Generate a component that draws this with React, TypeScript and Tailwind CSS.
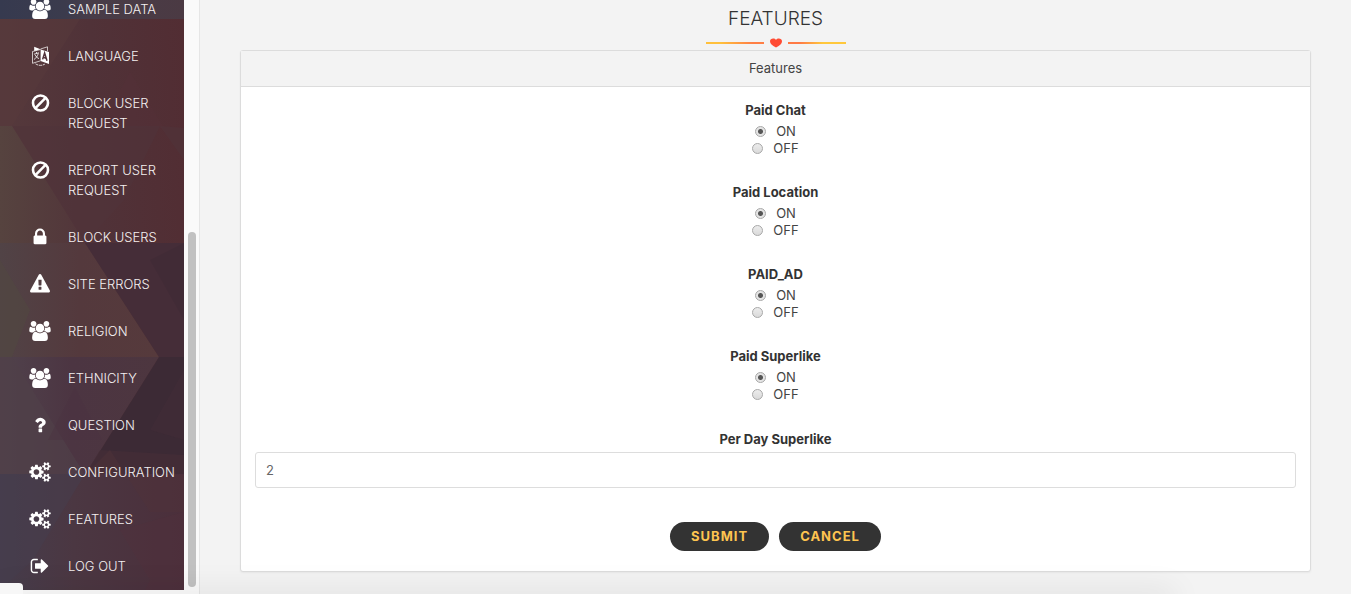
import type { ReactNode } from "react";

function Glyph({ d, wide = false }: { d: string; wide?: boolean }) {
  return (
    <svg
      viewBox={wide ? "0 0 1920 1792" : "0 0 1792 1792"}
      className={wide ? "h-5 w-[22px]" : "h-5 w-5"}
      fill="currentColor"
      aria-hidden="true"
    >
      <path d={d} />
    </svg>
  );
}

const usersPath =
  "M593 896q-162 5-265 128h-134q-82 0-138-40.5t-56-118.5q0-353 124-353 6 0 43.5 21t97.5 42.5 119 21.5q67 0 133-23-5 37-5 66 0 139 81 256zm1071 637q0 120-73 189.5t-194 69.5h-874q-121 0-194-69.5t-73-189.5q0-53 3.5-103.5t14-109 26.5-108.5 43-97.5 62-81 85.5-53.5 111.5-20q10 0 43 21.5t73 48 107 48 135 21.5 135-21.5 107-48 73-48 43-21.5q61 0 111.5 20t85.5 53.5 62 81 43 97.5 26.5 108.5 14 109 3.5 103.5zm-1024-1277q0 106-75 181t-181 75-181-75-75-181 75-181 181-75 181 75 75 181zm704 384q0 159-112.5 271.5t-271.5 112.5-271.5-112.5-112.5-271.5 112.5-271.5 271.5-112.5 271.5 112.5 112.5 271.5zm576 225q0 78-56 118.5t-138 40.5h-134q-103-123-265-128 81-117 81-256 0-29-5-66 66 23 133 23 59 0 119-21.5t97.5-42.5 43.5-21q124 0 124 353zm-128-609q0 106-75 181t-181 75-181-75-75-181 75-181 181-75 181 75 75 181z";
const cogsPath =
  "M896 896q0-106-75-181t-181-75-181 75-75 181 75 181 181 75 181-75 75-181zm768 512q0-52-38-90t-90-38-90 38-38 90q0 53 37.5 90.5t90.5 37.5 90.5-37.5 37.5-90.5zm0-1024q0-52-38-90t-90-38-90 38-38 90q0 53 37.5 90.5t90.5 37.5 90.5-37.5 37.5-90.5zm-384 421v185q0 10-7 19.5t-16 10.5l-155 24q-11 35-32 76 34 48 90 115 7 11 7 20 0 12-7 19-23 30-82.5 89.5t-78.5 59.5q-11 0-21-7l-115-90q-37 19-77 31-11 108-23 155-7 24-30 24h-186q-11 0-20-7.5t-10-17.5l-23-153q-34-10-75-31l-118 89q-7 7-20 7-11 0-21-8-144-133-144-160 0-9 7-19 10-14 41-53t47-61q-23-44-35-82l-152-24q-10-1-17-9.5t-7-19.5v-185q0-10 7-19.5t16-10.5l155-24q11-35 32-76-34-48-90-115-7-11-7-20 0-12 7-20 22-30 82-89t79-59q11 0 21 7l115 90q34-18 77-32 11-108 23-154 7-24 30-24h186q11 0 20 7.5t10 17.5l23 153q34 10 75 31l118-89q8-7 20-7 11 0 21 8 144 133 144 160 0 8-7 19-12 16-42 54t-45 60q23 48 34 82l152 23q10 2 17 10.5t7 19.5zm640 533v140q0 16-149 31-12 27-30 52 51 113 51 138 0 4-4 7-122 71-124 71-8 0-46-47t-52-68q-20 2-30 2t-30-2q-14 21-52 68t-46 47q-2 0-124-71-4-3-4-7 0-25 51-138-18-25-30-52-149-15-149-31v-140q0-16 149-31 13-29 30-52-51-113-51-138 0-4 4-7 4-2 35-20t59-34 30-16q8 0 46 46.5t52 67.5q20-2 30-2t30 2q51-71 92-112l6-2q4 0 124 70 4 3 4 7 0 25-51 138 17 23 30 52 149 15 149 31zm0-1024v140q0 16-149 31-12 27-30 52 51 113 51 138 0 4-4 7-122 71-124 71-8 0-46-47t-52-68q-20 2-30 2t-30-2q-14 21-52 68t-46 47q-2 0-124-71-4-3-4-7 0-25 51-138-18-25-30-52-149-15-149-31v-140q0-16 149-31 13-29 30-52-51-113-51-138 0-4 4-7 4-2 35-20t59-34 30-16q8 0 46 46.5t52 67.5q20-2 30-2t30 2q51-71 92-112l6-2q4 0 124 70 4 3 4 7 0 25-51 138 17 23 30 52 149 15 149 31z";
const lockPath =
  "M640 768h512v-192q0-106-75-181t-181-75-181 75-75 181v192zm832 96v576q0 40-28 68t-68 28h-960q-40 0-68-28t-28-68v-576q0-40 28-68t68-28h32v-192q0-184 132-316t316-132 316 132 132 316v192h32q40 0 68 28t28 68z";
const warningPath =
  "M1024 1375v-190q0-14-9.5-23.5t-22.5-9.5h-192q-13 0-22.5 9.5t-9.5 23.5v190q0 14 9.5 23.5t22.5 9.5h192q13 0 22.5-9.5t9.5-23.5zm-2-374l18-459q0-12-10-19-13-11-24-11h-220q-11 0-24 11-10 7-10 21l17 457q0 10 10 16.5t24 6.5h185q14 0 23.5-6.5t10.5-16.5zm-14-934l768 1408q35 63-2 126-17 29-46.5 46t-63.5 17h-1536q-34 0-63.5-17t-46.5-46q-37-63-2-126l768-1408q17-31 47-49t65-18 65 18 47 49z";
const questionPath =
  "M1088 1256v240q0 16-12 28t-28 12h-240q-16 0-28-12t-12-28v-240q0-16 12-28t28-12h240q16 0 28 12t12 28zm316-600q0 54-15.5 101t-35 76.5-55 59.5-57.5 43.5-61 35.5q-41 23-68.5 65t-27.5 67q0 17-12 32.5t-28 15.5h-240q-15 0-25.5-18.5t-10.5-37.5v-45q0-83 65-156.5t143-108.5q59-27 84-56t25-76q0-42-46.5-74t-107.5-32q-65 0-108 29-35 25-107 115-13 16-31 16-12 0-25-8l-164-125q-13-10-15.5-25t5.5-28q160-266 464-266 80 0 161 31t146 83 106 127.5 41 158.5z";
const logoutPath =
  "M704 1440q0 4 1 20t.5 26.5-3 23.5-10 19.5-20.5 6.5h-320q-119 0-203.5-84.5t-84.5-203.5v-704q0-119 84.5-203.5t203.5-84.5h320q13 0 22.5 9.5t9.5 22.5q0 4 1 20t.5 26.5-3 23.5-10 19.5-20.5 6.5h-320q-66 0-113 47t-47 113v704q0 66 47 113t113 47h312l11.5 1 11.5 3 8 5.5 7 9 2 13.5zm928-544q0 26-19 45l-544 544q-19 19-45 19t-45-19-19-45v-288h-448q-26 0-45-19t-19-45v-384q0-26 19-45t45-19h448v-288q0-26 19-45t45-19 45 19l544 544q19 19 19 45z";

function BanIcon() {
  return (
    <svg viewBox="0 0 20 20" className="h-5 w-5" fill="none" stroke="currentColor" strokeWidth="2.6" aria-hidden="true">
      <circle cx="10.5" cy="10" r="7.5" />
      <path d="M5.2 15.3 15.8 4.7" />
    </svg>
  );
}

function LanguageIcon() {
  return (
    <svg viewBox="0 0 20 20" className="h-5 w-5" fill="none" stroke="currentColor" aria-hidden="true">
      <path d="M10.6 3.4 19 6v12l-8.4-3z" fill="currentColor" stroke="none" />
      <path d="M4.2.8 10.5 3.2 4.2 5z" fill="currentColor" stroke="none" />
      <path d="M10.5 3.5 2.5 5.5v11.8l8-2.5M10.5 3 17.5.8v4.5" strokeWidth=".7" />
      <path d="M4 8.2 9 6.8M6.3 6l.6 1.4M8.3 7.5C7.7 10 6 12.2 4 13.5M5.2 8.8c.8 1.8 2 3 3.800 3.800" strokeWidth=".8" />
      <path d="m12.6 13.4 2-6.4 2.4 7.8M13.4 11.4l2.6.8" stroke="#52333a" strokeWidth="1.5" />
      <path d="M5.500 17.800c2.800 2 6.600 2 9.300.4" strokeWidth=".8" strokeDasharray="3 .7" />
    </svg>
  );
}

const menu: { label: string; icon: ReactNode }[] = [
  { label: "SAMPLE DATA", icon: <Glyph d={usersPath} wide /> },
  { label: "LANGUAGE", icon: <LanguageIcon /> },
  { label: "BLOCK USER REQUEST", icon: <BanIcon /> },
  { label: "REPORT USER REQUEST", icon: <BanIcon /> },
  { label: "BLOCK USERS", icon: <Glyph d={lockPath} /> },
  { label: "SITE ERRORS", icon: <Glyph d={warningPath} /> },
  { label: "RELIGION", icon: <Glyph d={usersPath} wide /> },
  { label: "ETHNICITY", icon: <Glyph d={usersPath} wide /> },
  { label: "QUESTION", icon: <Glyph d={questionPath} /> },
  { label: "CONFIGURATION", icon: <Glyph d={cogsPath} wide /> },
  { label: "FEATURES", icon: <Glyph d={cogsPath} wide /> },
  { label: "LOG OUT", icon: <Glyph d={logoutPath} /> },
];

function SidebarBackdrop() {
  return (
    <svg
      viewBox="0 0 184 590"
      preserveAspectRatio="none"
      className="absolute inset-0 h-full w-full"
      aria-hidden="true"
    >
      <defs>
        <linearGradient id="top" x1="0" x2="1">
          <stop offset="0" stopColor="#363a4f" />
          <stop offset=".35" stopColor="#3b3b4d" />
          <stop offset=".5" stopColor="#483c48" />
          <stop offset="1" stopColor="#4b3a43" />
        </linearGradient>
        <linearGradient id="red" x1="0" x2="1" y1=".2" y2="0">
          <stop offset="0" stopColor="#55393c" />
          <stop offset=".5" stopColor="#503238" />
          <stop offset="1" stopColor="#522d33" />
        </linearGradient>
        <linearGradient id="brown" x1="0" x2="1">
          <stop offset="0" stopColor="#56433f" />
          <stop offset="1" stopColor="#52353a" />
        </linearGradient>
        <linearGradient id="mid" x1="0" x2="1">
          <stop offset="0" stopColor="#514346" />
          <stop offset=".5" stopColor="#54393d" />
          <stop offset="1" stopColor="#563a3c" />
        </linearGradient>
        <linearGradient id="plum" x1="0" x2="1">
          <stop offset="0" stopColor="#50424c" />
          <stop offset=".45" stopColor="#4c3542" />
          <stop offset="1" stopColor="#4d363f" />
        </linearGradient>
        <linearGradient id="low" x1="0" x2="1">
          <stop offset="0" stopColor="#463d4c" />
          <stop offset=".4" stopColor="#4b3742" />
          <stop offset="1" stopColor="#4b2f3b" />
        </linearGradient>
      </defs>
      <rect width="184" height="590" fill="url(#red)" />
      <rect width="184" height="19" fill="url(#top)" />
      <path d="M80 19 12 126 0 126V19Z" fill="#58393c" opacity=".5" />
      <path d="M130 72 164 128H100Z" fill="#573238" opacity=".35" />
      <path d="M12 126H160L184 160V128L160 126 124 200 85 243Z" fill="#50343a" opacity=".6" />
      <path d="M0 126H12L85 243H0Z" fill="url(#brown)" />
      <path d="M0 243H85L159 357H0Z" fill="url(#mid)" />
      <path d="M0 260 30 310 12 357H0Z" fill="#524741" opacity=".6" />
      <path d="M85 243H184V357H159Z" fill="#452d38" />
      <path d="M150 260 184 243V320Z" fill="#3f2a36" opacity=".6" />
      <path d="M0 357H159L85 475H0Z" fill="url(#plum)" />
      <path d="M0 357H12L85 475H0Z" fill="#504049" opacity=".7" />
      <path d="M75 387 102 440H48Z" fill="#4b3242" opacity=".4" />
      <path d="M159 357H184V475H85Z" fill="#3c2a35" />
      <path d="M184 370 150 430 184 440Z" fill="#412c37" opacity=".5" />
      <path d="M100 450 184 455V475H85Z" fill="#452d37" opacity=".7" />
      <rect y="474" width="184" height="116" fill="url(#low)" />
      <path d="M0 474H85L33 560 0 590Z" fill="#453e4d" opacity=".5" />
      <path d="M110 450 150 512H184V475H85Z" fill="#50323a" opacity=".45" />
      <path d="M120 530 150 580 145 590H184V512Z" fill="#54303b" opacity=".35" />
    </svg>
  );
}

function Sidebar() {
  return (
    <aside className="flex w-[200px] shrink-0 bg-[#fafafa]">
      <nav className="relative w-[184px] self-start overflow-hidden pb-3.5">
        <SidebarBackdrop />
        <ul className="relative -mt-px flex flex-col gap-[27px]">
          {menu.map((item) => (
            <li key={item.label}>
              <a href="#" className="flex text-[13px] font-light leading-5 text-[#f4f0f1]">
                <span className="ml-[26px] mr-[15px] flex h-5 w-[27px] shrink-0 items-center justify-center text-white">
                  {item.icon}
                </span>
                <span>{item.label}</span>
              </a>
            </li>
          ))}
        </ul>
      </nav>
      <div className="flex grow flex-col border-r border-[#e6e6e6] pl-1 pt-[232px]">
        <div className="mb-[7px] w-2 grow rounded-full bg-[#c1c1c1]" />
      </div>
    </aside>
  );
}

function Divider() {
  return (
    <svg viewBox="0 0 142 10" className="h-2.5 w-[142px]" aria-hidden="true">
      <defs>
        <linearGradient id="leftLine" x1="0" x2="1">
          <stop offset=".25" stopColor="#ffc03c" />
          <stop offset=".8" stopColor="#ff7f45" />
        </linearGradient>
        <linearGradient id="rightLine" x1="0" x2="1">
          <stop offset=".2" stopColor="#ff7a45" />
          <stop offset=".6" stopColor="#ffc83c" />
        </linearGradient>
      </defs>
      <rect x="1" y="4" width="58" height="2" fill="url(#leftLine)" />
      <rect x="83" y="4" width="58" height="2" fill="url(#rightLine)" />
      <path d="M71 9.6C67 7.4 65 5.5 65 3.2 65 .3 69.5-.4 71 2c1.5-2.4 6-1.7 6 1.2 0 2.3-2 4.2-6 6.4Z" fill="#ff4b33" />
    </svg>
  );
}

const radioClass =
  "size-[11px] shrink-0 appearance-none rounded-full border border-[#a8a8a8] bg-linear-to-b from-[#ececec] to-[#dadada] checked:bg-[radial-gradient(circle,#555_0_2px,#e4e4e4_3px)]";

function Toggle({ name }: { name: string }) {
  return (
    <fieldset className="flex flex-col items-center">
      <legend className="mx-auto mb-[3px] font-bold leading-5 text-[#333]">{name}</legend>
      {["ON", "OFF"].map((value) => (
        <label key={value} className="flex items-center gap-2.5 leading-[17px]">
          <input type="radio" name={name} value={value} defaultChecked={value === "ON"} className={radioClass} />
          {value}
        </label>
      ))}
    </fieldset>
  );
}

const buttonClass =
  "h-[29px] rounded-full bg-[#333] px-[21px] text-[13px] font-bold tracking-[1px] text-[#fec550]";

export default function App() {
  return (
    <div className="relative flex min-h-screen overflow-hidden bg-[#f3f3f3] font-['Inter',sans-serif] text-[13px] text-[#444]">
      <Sidebar />
      <main className="flex grow flex-col items-center px-10 pb-[22px] pt-[7px]">
        <h1 className="text-[19px] font-light leading-6 text-[#333]">FEATURES</h1>
        <div className="flex h-[19px] items-end pb-0.5">
          <Divider />
        </div>
        <section className="w-full rounded-[3px] border border-[#dcdcdc] bg-white shadow-xs">
          <h2 className="border-b border-[#dcdcdc] bg-[#f3f3f3] text-center leading-[35px]">Features</h2>
          <form className="px-3.5 pb-5 pt-[13px]" onSubmit={(e) => e.preventDefault()}>
            <div className="flex flex-col gap-[25px]">
              <Toggle name="Paid Chat" />
              <Toggle name="Paid Location" />
              <Toggle name="PAID_AD" />
              <Toggle name="Paid Superlike" />
            </div>
            <label htmlFor="superlike" className="mb-[3px] mt-[26px] block text-center font-bold leading-5 text-[#333]">
              Per Day Superlike
            </label>
            <input
              id="superlike"
              type="text"
              defaultValue="2"
              className="block h-9 w-full rounded-[3px] border border-[#ddd] bg-white px-2.5 text-[#666]"
            />
            <div className="mt-[34px] flex justify-center gap-2.5">
              <button type="submit" className={buttonClass}>SUBMIT</button>
              <button type="button" className={buttonClass}>CANCEL</button>
            </div>
          </form>
        </section>
      </main>
      <div className="pointer-events-none absolute -bottom-2 left-0 h-2 w-[87%] shadow-[0_0_30px_rgba(0,0,0,0.18)]" />
      <div className="absolute bottom-0 left-0 h-[11px] w-[23px] rounded-tr bg-[#f7f7f7]" />
    </div>
  );
}
